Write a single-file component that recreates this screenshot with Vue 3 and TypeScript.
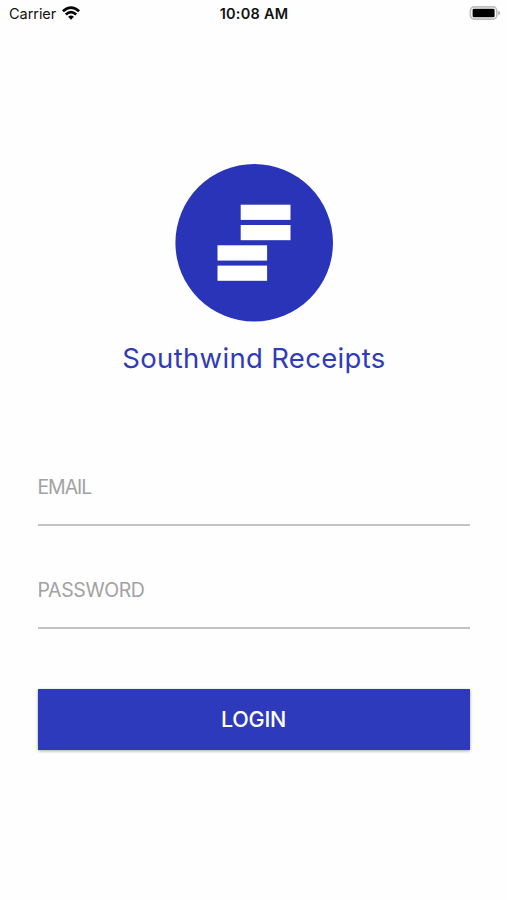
<script setup lang="ts">
import { ref } from 'vue'

const email = ref('')
const password = ref('')
</script>

<template>
  <div class="screen">
    <header class="status">
      <div class="carrier">
        <span>Carrier</span>
        <svg class="wifi" width="18" height="14" viewBox="0 0 18 14">
          <g fill="none" stroke="#050505" stroke-width="2.7">
            <path d="M0.9 5.3Q9 -2.1 17.1 5.3" />
            <path d="M3.8 8.5Q9 3.7 14.2 8.5" />
          </g>
          <path d="M6.1 10.8Q9 8.3 11.9 10.8L9 13.7Z" fill="#050505" />
        </svg>
      </div>
      <span class="time">10:08 AM</span>
      <svg class="battery" width="32" height="14" viewBox="0 0 32 14">
        <rect x="1.4" y="0.9" width="26.4" height="12.2" rx="3.8" fill="#fff" stroke="#bdbdbd" stroke-width="1.6" />
        <rect x="3.6" y="2.7" width="22" height="8.6" rx="1.4" fill="#000" />
        <path d="M29.2 4.8Q31.2 5.4 31.2 7T29.2 9.2Z" fill="#b0b0b0" />
      </svg>
    </header>
    <main>
      <svg class="logo" width="160" height="160" viewBox="0 0 160 160">
        <circle cx="80.2" cy="79.8" r="78.8" fill="#2934b8" />
        <g fill="#fff">
          <rect x="66.7" y="41.7" width="49.8" height="15.2" />
          <rect x="66.7" y="62" width="49.8" height="15.2" />
          <rect x="43.5" y="82.3" width="49.6" height="15.3" />
          <rect x="43.5" y="102.6" width="49.6" height="15.2" />
        </g>
      </svg>
      <h1>Southwind Receipts</h1>
      <form @submit.prevent>
        <input v-model="email" class="email" type="email" placeholder="EMAIL" aria-label="EMAIL" />
        <input v-model="password" class="password" type="password" placeholder="PASSWORD" aria-label="PASSWORD" />
        <button type="submit">LOGIN</button>
      </form>
    </main>
  </div>
</template>

<style>
body { margin: 0; background: #fefefe; }
</style>

<style scoped>
.screen { height: 900px; box-sizing: border-box; background: #fefefe; font-family: Inter, sans-serif; overflow: hidden; }
.status { height: 28px; padding: 0 6px 0 9px; display: grid; grid-template-columns: 1fr auto 1fr; align-items: center; color: #111; font-size: 14.5px; line-height: 28px; }
.carrier { display: flex; align-items: center; gap: 6px; letter-spacing: -0.05px; }
.wifi { margin-top: -2px; }
.time { margin-right: 2px; font-weight: 600; letter-spacing: 0.25px; font-size: 14.5px; }
.battery { justify-self: end; margin-top: -2px; }
main { padding: 135px 37px 0 38px; display: flex; flex-direction: column; align-items: center; }
.logo { display: block; }
h1 { margin: 17px 0 0; height: 36px; line-height: 36px; font-size: 27.5px; font-weight: 400; letter-spacing: 0.33px; color: #2f3bb9; white-space: nowrap; }
form { width: 432px; margin-top: 73px; display: flex; flex-direction: column; }
input { appearance: none; box-sizing: border-box; width: 100%; height: 77px; margin: 0; padding: 0; border: 0; border-bottom: 2px solid #c3c3c3; border-radius: 0; outline: 0; background: transparent; color: #333; font: 400 19.5px/74px Inter, sans-serif; text-indent: -0.5px; }
input::placeholder { color: #a2a2a2; opacity: 1; }
.email { letter-spacing: -1.1px; }
.password { margin-top: 26px; letter-spacing: -0.4px; }
button { width: 432px; height: 61px; margin: 60px 0 0; padding: 0 1px 0 0; border: 0; background: #2d3abc; color: #fff; font: 500 21.5px/61px Inter, sans-serif; letter-spacing: -0.2px; box-shadow: 0 1px 3px rgba(0, 0, 0, 0.35); }
</style>
